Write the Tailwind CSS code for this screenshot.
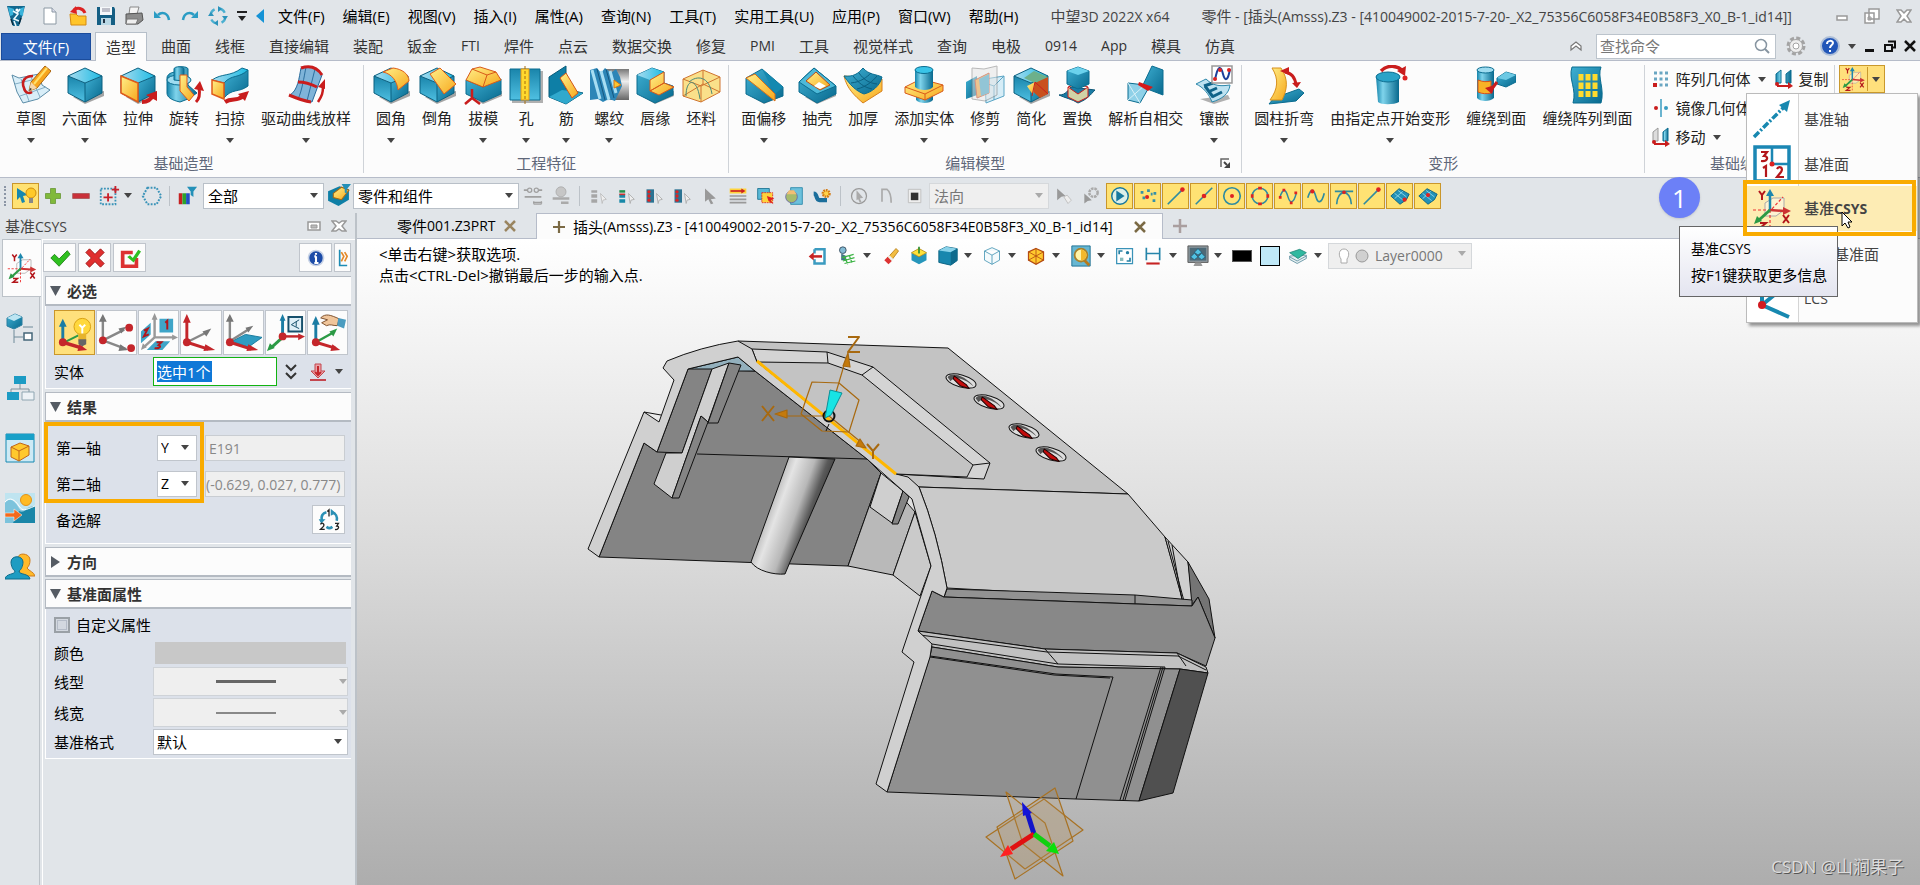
<!DOCTYPE html>
<html lang="zh-CN">
<head>
  <meta charset="UTF-8" />
  <meta name="viewport" content="width=device-width, initial-scale=1.0" />
  <title>中望3D 2022X x64</title>
  <script src="https://cdn.jsdelivr.net/npm/@tailwindcss/browser@4"></script>
</head>
<body class="relative flex h-screen flex-col overflow-hidden bg-[#e1e5e9] font-['Open_Sans','Noto_Sans_CJK_SC',sans-serif] text-[15px] leading-5 text-[#222]">

  <!-- icon sprite -->
  <svg class="absolute size-0" aria-hidden="true">
    <defs>
      <linearGradient id="teal" x1="0" y1="0" x2="1" y2="1"><stop offset="0" stop-color="#3fb0d3" /><stop offset="1" stop-color="#08698e" /></linearGradient>
      <linearGradient id="tealL" x1="0" y1="0" x2="0" y2="1"><stop offset="0" stop-color="#1a85ab" /><stop offset="1" stop-color="#4fc0e2" /></linearGradient>
      <linearGradient id="tealT" x1="0" y1="0" x2="1" y2="0"><stop offset="0" stop-color="#a9dcef" /><stop offset="1" stop-color="#1cbbe4" /></linearGradient>
      <linearGradient id="tube" x1="0" y1="0" x2="1" y2="0"><stop offset="0" stop-color="#1584ab" /><stop offset=".3" stop-color="#7fd4ec" /><stop offset="1" stop-color="#08698e" /></linearGradient>
      <linearGradient id="gold" x1="0" y1="0" x2="1" y2="1"><stop offset="0" stop-color="#fff08a" /><stop offset="1" stop-color="#f7a81c" /></linearGradient>
      <linearGradient id="steel" x1="0" y1="0" x2="0" y2="1"><stop offset="0" stop-color="#777" /><stop offset=".4" stop-color="#eee" /><stop offset="1" stop-color="#666" /></linearGradient>
      <g id="shadow"><path d="M8 32 20 39 39 31 39 26z" fill="#000" opacity=".35" /></g>
      <g id="box">
        <use href="#shadow" />
        <path d="M20 3 37 11 20 18 3 11z" fill="url(#tealT)" /><path d="M3 11 20 18V37L3 28z" fill="url(#tealL)" /><path d="M20 18 37 11V28L20 37z" fill="url(#teal)" />
        <path d="M20 3 37 11 20 18 3 11zM3 11V28L20 37 37 28V11M20 18V37" fill="none" stroke="#0b6080" />
      </g>
    </defs>
    <symbol id="caret" viewBox="0 0 8 5"><path d="M0 0h8L4 5z" fill="#444" /></symbol>
    <symbol id="caret-off" viewBox="0 0 8 5"><path d="M0 0h8L4 5z" fill="#aaa" /></symbol>

    <symbol id="logo" viewBox="0 0 20 22"><path d="M1 1h18l-3 11-3 9H7L4 12z" fill="#12688f" /><path d="M2 2l6 2-1 6-3 1zM18 2l-5 2 1 6 3 1z" fill="#39b4dc" /><path d="M7 6l5 3-4 5 5 2M14 4l-3 4M8 16l2 5" stroke="#eaf7fc" stroke-width="1.600" fill="none" /><circle cx="11" cy="5" r="1.600" fill="#fff" /><path d="M5 14l2 6M15 13l-2 6" stroke="#0a2e42" stroke-width="1.500" /></symbol>
    <symbol id="new" viewBox="0 0 20 20"><path d="M4 2h8l4 4v12H4z" fill="#fff" stroke="#8b98a3" /><path d="M12 2v4h4" fill="#dde" stroke="#8b98a3" /></symbol>
    <symbol id="open" viewBox="0 0 20 20"><path d="M2 8h6l2 2h8v9H3z" fill="#ffc52b" stroke="#d58b12" /><path d="M17 7C15 2 9 1 6 4" stroke="#d22" stroke-width="3" fill="none" /><path d="M8 0 2 6l7 2z" fill="#d22" /></symbol>
    <symbol id="save" viewBox="0 0 20 20"><path d="M1 1h17l1 2v16H1z" fill="#155f84" /><path d="M4 1h12v8H4z" fill="#f5f8fa" /><path d="M5 12h10v7H5z" fill="#b9d7e4" /><path d="M6 3h8M6 5h8" stroke="#889" /><path d="M7 13h2v4H7z" fill="#234" /></symbol>
    <symbol id="print" viewBox="0 0 20 20"><path d="M6 1h9l-2 7H5z" fill="#f4f4f4" stroke="#888" /><path d="M2 8l16-1 1 7-5 4H2z" fill="#8c8c8c" stroke="#555" /><path d="M3 13h11l-2 5H2z" fill="#eee" stroke="#777" /></symbol>
    <symbol id="undo" viewBox="0 0 20 20"><path d="M17 14C16 7 10 5 6 9" stroke="#2b9cc4" stroke-width="2.500" fill="none" /><path d="M2 5v7h7z" fill="#2b9cc4" /></symbol>
    <symbol id="redo" viewBox="0 0 20 20"><path d="M3 14C4 7 10 5 14 9" stroke="#2b9cc4" stroke-width="2.500" fill="none" /><path d="M18 5v7h-7z" fill="#2b9cc4" /></symbol>
    <symbol id="regen" viewBox="0 0 20 20"><circle cx="10" cy="10" r="7.5" fill="none" stroke="#4aafd0" stroke-width="2.4" stroke-dasharray="8 3.8" /><path d="M10 0l4 3-4 3zM20 10l-3 4-3-4zM10 20l-4-3 4-3zM0 10l3-4 3 4z" fill="#2b93bb" /></symbol>

    <!-- ribbon, 40x40 -->
    <symbol id="sketch" viewBox="0 0 40 40"><path d="M1 10 8 13 28 9 31 20 39 25 27 34 12 38 6 27z" fill="#d9eef8" stroke="#5c8da8" /><path d="M4 19l25-6M9 31l26-9M10 14l8 22M20 12l9 20" stroke="#84aec6" fill="none" /><path d="M22 11c-8 0-12 5-9 12 1 5 5 6 8 4" fill="none" stroke="#c81e1e" stroke-width="2.6" /><path d="M18 26l2-9L34 1l6 5-14 17z" fill="#f7a51d" stroke="#ab6510" /><path d="M23 19 36 3" stroke="#ffdf6a" stroke-width="2" /><path d="M18 26l2-9 6 6z" fill="#f5d7ab" /><path d="M18 26l1-3 2 1z" fill="#333" /></symbol>
    <symbol id="cube" viewBox="0 0 40 40"><use href="#box" /></symbol>
    <symbol id="extrude" viewBox="0 0 40 40"><use href="#box" /><path d="M3 11 20 18V37L3 28z" fill="url(#gold)" stroke="#e05a1a" stroke-width="1.5" /><path d="M24 37c6 0 9-2 11-7" stroke="#c91d1d" stroke-width="4" fill="none" /><path d="M28 30l11-4v10z" fill="#c91d1d" /></symbol>
    <symbol id="revolve" viewBox="0 0 40 40"><path d="M3 13c0-4 5-6 9-6V4c0-3 12-3 12 0v16l9 8-9 6-8 3C7 35 3 32 3 28z" fill="url(#tube)" stroke="#0b6d90" /><ellipse cx="15" cy="15" rx="12" ry="5" fill="#9edcf0" stroke="#0b6d90" /><path d="M10 15V4c0-3 10-3 10 0v12z" fill="url(#tube)" stroke="#0b6d90" /><path d="M16 10h7v12l7 8-5 6-9-10z" fill="url(#gold)" stroke="#e05a1a" /><path d="M32 37c4-4 4-9 3-14" stroke="#c91d1d" stroke-width="3" fill="none" /><path d="M30 24l6-8 4 10z" fill="#c91d1d" /></symbol>
    <symbol id="sweep" viewBox="0 0 40 40"><path d="M14 15c10-9 14-1 24-10v16c-9 7-16 2-24 12z" fill="url(#teal)" stroke="#0b6d90" /><path d="M2 15C12 8 20 12 32 3l6 2C28 14 22 9 14 18z" fill="url(#tealT)" stroke="#0b6d90" /><path d="M2 15l12 3v16L2 29z" fill="url(#gold)" stroke="#e05a1a" stroke-width="1.5" /><path d="M15 37c7-5 12 0 18-6" stroke="#c91d1d" stroke-width="4" fill="none" /><path d="M28 29l11-3-4 10z" fill="#c91d1d" /></symbol>
    <symbol id="loft" viewBox="0 0 40 40"><path d="M15 3c9-3 16-1 21 7L26 37C18 36 11 33 4 30c8-5 9-17 11-27z" fill="#7fb4d9" stroke="#26699a" /><path d="M20 2c-2 10-4 24-8 32M29 4l-8 32" stroke="#2d6f9e" fill="none" /><path d="M15 3c9-3 16-1 21 7M12 17c8 0 13 2 19 5M3 30c7 3 14 6 22 7" stroke="#c91d1d" stroke-width="3" fill="none" /><path d="M32 37c4-6 5-9 5-16" stroke="#c91d1d" stroke-width="2.500" fill="none" /><path d="M32 22l7-8v10z" fill="#c91d1d" /></symbol>
    <symbol id="fillet" viewBox="0 0 40 40"><use href="#box" /><path d="M12 7 22 3c9 1 16 6 16 13L27 25C26 16 21 9 12 7z" fill="url(#gold)" stroke="#e0601a" /></symbol>
    <symbol id="chamfer" viewBox="0 0 40 40"><use href="#box" /><path d="M13 9 23 3 39 19 27 29z" fill="url(#gold)" stroke="#e0601a" /></symbol>
    <symbol id="draft" viewBox="0 0 40 40"><use href="#shadow" /><path d="M3 15 20 22 38 14V29L20 37 3 29z" fill="url(#teal)" stroke="#0b6d90" /><path d="M9 4 17 2 33 7 38 15 20 22 3 15z" fill="url(#gold)" stroke="#d85a1a" /><path d="M9 4l15 6 9-3M24 10l-4 12" fill="none" stroke="#d85a1a" /><path d="M9 24v10M9 33l-7 6M9 33l8 6" stroke="#c91d1d" stroke-width="2.5" /></symbol>
    <symbol id="hole" viewBox="0 0 40 40"><path d="M6 6h31v32H6z" fill="#000" opacity=".3" /><path d="M4 4h30v31H4z" fill="url(#tealL)" stroke="#0b6d90" /><path d="M15 4h8v31h-8z" fill="#ffd92d" stroke="#e0951a" /><path d="M19 1v38" stroke="#a46a11" stroke-dasharray="3 2" /></symbol>
    <symbol id="rib" viewBox="0 0 40 40"><path d="M3 12 20 1v23l17 4-17 11L3 32z" fill="#0e7fa6" stroke="#075a79" /><path d="M3 32l13-7 21 3-17 11z" fill="#30a9cd" /><path d="M14 13l6-5 12 20-6 5z" fill="url(#gold)" stroke="#d2561a" /></symbol>
    <symbol id="thread" viewBox="0 0 40 40"><path d="M18 4h22v31H18z" fill="url(#steel)" /><path d="M1 5l7-2 4 5 4-5 6 5 5-4 4 8 2 9-7 15-6-2-6 3-5-3-8 1z" fill="#2c86b7" /><path d="M3 5l8 29M12 6l8 29M21 6l6 22" stroke="#a6ddf2" stroke-width="3" fill="none" /><path d="M8 4l8 31M17 4l8 29" stroke="#155780" fill="none" /><path d="M25 15l7 5-7 3z" fill="#fdc52e" stroke="#d2741a" /></symbol>
    <symbol id="lip" viewBox="0 0 40 40"><use href="#shadow" /><path d="M2 10 17 3l12 4v11l9 3v9L20 38 2 29z" fill="url(#teal)" stroke="#0b6d90" /><path d="M2 10 17 3l12 4-14 8z" fill="url(#tealT)" /><path d="M15 15l14-8v11l-14 8zM15 26l14-8 10 4-15 8z" fill="url(#gold)" stroke="#d85a1a" /></symbol>
    <symbol id="stock" viewBox="0 0 40 40"><path d="M2 14 22 5l17 7v15L20 37 2 31z" fill="#fae08a" stroke="#cf7430" /><path d="M2 14l18 7 19-9M20 21v16M22 5v14L2 31M22 19l17 8" fill="none" stroke="#cf7430" /><path d="M5 31c0-18 11-19 14 3M8 17c8-7 20-6 23 12" fill="none" stroke="#4b8a79" /></symbol>
    <symbol id="offset" viewBox="0 0 40 40"><use href="#shadow" /><path d="M2 13 18 4l21 18v9L20 38 2 29z" fill="url(#teal)" stroke="#0b6d90" /><path d="M18 4l21 18-8 7z" fill="#1489b0" /><path d="M2 13l9-4 20 20v7L2 13z" fill="url(#gold)" stroke="#d8701a" /></symbol>
    <symbol id="shell" viewBox="0 0 40 40"><use href="#shadow" /><path d="M2 17 17 3l22 18v8L20 38 2 27z" fill="url(#teal)" stroke="#0b6d90" /><path d="M2 17 17 3l22 18-19 8z" fill="#4db9d8" stroke="#0b6d90" /><path d="M9 16l10-9 14 13-10 5z" fill="url(#gold)" stroke="#b94c1a" /><path d="M17 21l5-4 7 4-6 3z" fill="#fff" /></symbol>
    <symbol id="thicken" viewBox="0 0 40 40"><path d="M1 11l38 3v12L20 38C12 31 4 24 1 11z" fill="url(#gold)" stroke="#d8801a" /><path d="M1 11C10 12 15 9 20 3c6 7 13 6 19 9-2 9-10 15-18 17C13 26 7 20 1 11z" fill="url(#teal)" stroke="#0b6d90" /><path d="M8 18C18 17 24 12 28 8M14 24c9-2 16-8 20-13M10 11c6 7 10 11 19 13M16 8c5 7 10 10 18 11" stroke="#0b5f80" fill="none" /></symbol>
    <symbol id="union" viewBox="0 0 40 40"><path d="M12 28h17v7c-3 4-14 4-17 0z" fill="url(#tube)" /><path d="M1 22l16-8 22 6v6L21 35 1 28z" fill="url(#gold)" stroke="#d85a1a" /><path d="M1 22l20 7 18-9M21 29v6" stroke="#d85a1a" fill="none" /><path d="M11 5v17c4 4 15 4 18 0V5z" fill="url(#tube)" /><ellipse cx="20" cy="5" rx="9" ry="3.500" fill="#39c4e8" stroke="#0b6d90" /></symbol>
    <symbol id="trim" viewBox="0 0 40 40"><path d="M1 17 12 11v19L1 34z" fill="url(#teal)" /><path d="M20 14l19-3v20l-18 7z" fill="#d6edf7" stroke="#5aa5c5" /><path d="M20 18l9 3 10-10M29 21v14" stroke="#5aa5c5" fill="none" /><path d="M10 15 24 8v20l-12 5z" fill="#f6a53a" stroke="#c9421d" /><path d="M14 14l10-5v19l-8 3z" fill="#3fa6c8" /><path d="M7 3l12 1 13-3v29L20 36 7 34z" fill="#e4e4e4" opacity=".5" stroke="#777" /></symbol>
    <symbol id="simplify" viewBox="0 0 40 40"><use href="#box" /><path d="M24 17l13-5v17l-8 4-12-11z" fill="#c9501d" /><path d="M13 13 23 6l14 6-13 6z" fill="#6db08b" /><path d="M16 21l8-4-2 13z" fill="url(#gold)" /><path d="M24 17l13 12M24 17l-3 14" stroke="#c91d1d" fill="none" /></symbol>
    <symbol id="replace" viewBox="0 0 40 40"><path d="M2 30c7 0 9-5 12-8l24 3c-5 5-7 9-17 13-6-4-13-5-19-8z" fill="#1a7ca5" stroke="#0b5575" /><path d="M11 22l9-3 11 3-10 7zM11 22v10l10 5 10-5V22" fill="#ffe9a6" stroke="#c91d1d" fill-opacity=".8" /><path d="M10 6l11-4 11 4v13l-11 5-11-5z" fill="url(#teal)" stroke="#0b6d90" /><path d="M10 6l11 4 11-4-11-4z" fill="#6bd2ed" /></symbol>
    <symbol id="selfx" viewBox="0 0 40 40"><path d="M16 22 26 1l11 4v25z" fill="url(#teal)" stroke="#0b6d90" /><path d="M2 18l17 2 3 4-8 14-12-3z" fill="#8fd1e8" stroke="#0b6d90" /><path d="M2 18l12 20M19 20 2 35" stroke="#d8f0f8" fill="none" /><path d="M13 17l14 5-5 4-10-6z" fill="#d61a1a" /></symbol>
    <symbol id="emboss" viewBox="0 0 40 40"><path d="M6 34l14 5 16-5-2-4z" fill="#000" opacity=".3" /><path d="M2 19l10-5c8 8 16 7 24 6-1 9-8 14-18 17C15 29 9 22 2 19z" fill="#bde2f1" stroke="#2d88ab" /><path d="M10 21l9-3M14 27l9-4M18 32l10-5M11 21l8 11" stroke="#0f6389" stroke-width="3" fill="none" /><path d="M18 1h20v17H18z" fill="#fff" stroke="#999" stroke-width="1.500" /><path d="M21 15c3-16 6-14 8-6s5 7 7-5" stroke="#1c3f9b" stroke-width="2" fill="none" /><circle cx="21" cy="14" r="2" fill="#d22" /><circle cx="26" cy="5" r="2" fill="#d22" /><circle cx="35" cy="5" r="2" fill="#d22" /></symbol>
    <symbol id="bend" viewBox="0 0 40 40"><path d="M10 33l25-9 5 4-8 8-27 3z" fill="url(#teal)" stroke="#0b6d90" /><path d="M8 3h9c8 12 6 22 1 32H6C14 24 15 14 8 3z" fill="url(#gold)" stroke="#d8901a" /><path d="M21 7c7 1 10 5 11 13" stroke="#c91d1d" stroke-width="3" fill="none" /><path d="M16 6l9-4v8zM28 18l9-1-4 6z" fill="#c91d1d" /></symbol>
    <symbol id="morph" viewBox="0 0 40 40"><path d="M6 12h23v25c-5 3-18 3-21 0z" fill="url(#tube)" /><ellipse cx="18" cy="12" rx="12" ry="5" fill="#2aa3c8" stroke="#0b6d90" /><path d="M11 6C18-1 27 1 32 5" stroke="#c91d1d" stroke-width="3.500" fill="none" /><path d="M27 6l9-5-1 10z" fill="#c91d1d" /><circle cx="35" cy="13" r="2.500" fill="#d22" /></symbol>
    <symbol id="wrap" viewBox="0 0 40 40"><path d="M1 5h17v28c-4 4-14 4-17 0z" fill="url(#tube)" /><ellipse cx="9.500" cy="5" rx="8.500" ry="3" fill="#9edcf0" stroke="#0b6d90" /><path d="M2 15c5 2 9 2 13 1v12c-4 1-9 1-13-1z" fill="#f8b226" stroke="#d8501a" /><path d="M21 13l9-6 10 3v7l-10 5-9-3z" fill="url(#teal)" stroke="#0b6d90" /><path d="M21 13l9-6 10 3-10 5z" fill="#6cc9e4" /><path d="M19 20l-10 3 7 6z" fill="#c91d1d" /><path d="M21 17l-6 8" stroke="#c91d1d" stroke-width="3" /></symbol>
    <symbol id="wrap-arr" viewBox="0 0 40 40"><path d="M5 2h29c-4 10 4 22 0 36H6c4-14-5-24-1-36z" fill="url(#teal)" stroke="#0b6d90" /><path d="M14 9v23M21 9v23M28 9v23" stroke="#ffdb2e" stroke-width="5" stroke-dasharray="6.500 2" /></symbol>

    <symbol id="array" viewBox="0 0 20 20"><path d="M3 4h14M3 10h14" stroke="#6aa6c2" stroke-width="3" stroke-dasharray="3 2.500" /><path d="M8.500 16h9" stroke="#6aa6c2" stroke-width="3" stroke-dasharray="3 2.500" /><path d="M2 14h4v4H2z" fill="#c91d1d" /></symbol>
    <symbol id="mirror" viewBox="0 0 20 20"><path d="M10 1v18" stroke="#3a9cc1" stroke-width="1.500" /><circle cx="5" cy="10" r="2" fill="#c91d1d" /><circle cx="15" cy="10" r="2" fill="#3a9cc1" /></symbol>
    <symbol id="copy" viewBox="0 0 20 20"><path d="M2 5l5-4v13H2zM12 5l5-4v13h-5z" fill="url(#tube)" stroke="#0b6d90" /><path d="M3 17h12" stroke="#c91d1d" stroke-width="2" /><path d="M14 13l5 4-5 3z" fill="#c91d1d" /><circle cx="3" cy="15" r="2" fill="#c91d1d" /></symbol>
    <symbol id="move" viewBox="0 0 20 20"><path d="M2 5l5-4v13H2z" fill="#ddd" stroke="#999" /><path d="M12 5l5-4v13h-5z" fill="url(#tube)" stroke="#0b6d90" /><path d="M3 17h12" stroke="#c91d1d" stroke-width="2" /><path d="M14 13l5 4-5 3z" fill="#c91d1d" /><circle cx="3" cy="15" r="2" fill="#c91d1d" /></symbol>
    <symbol id="csys" viewBox="0 0 40 40"><path d="M13 14l8-5h11v12l-8 6H13z" fill="#fff" fill-opacity=".4" stroke="#aaa" /><path d="M1 21h17M18 39V22l13-14" stroke="#e33" stroke-width="1.200" stroke-dasharray="3 2" fill="none" /><path d="M18 21V5" stroke="#1d87ae" stroke-width="2.500" /><path d="M14 7l4-7 4 7z" fill="#1d87ae" /><path d="M18 21l14 1" stroke="#c33" stroke-width="2.500" /><path d="M31 18l8 4-8 4z" fill="#c33" /><path d="M18 21 7 31" stroke="#2b9a45" stroke-width="3" /><path d="M2 35l3-8 5 5z" fill="#2b9a45" /><path d="M7 2l3 4 3-4M10 6v5M31 26l6 8M37 26l-6 8M8 34h6l-6 5h7" stroke="#b3161b" stroke-width="2" fill="none" /></symbol>
    <symbol id="axis" viewBox="0 0 40 40"><path d="M2 38 32 8" stroke="#1788b0" stroke-width="3.500" stroke-dasharray="7 2 2 2" /><path d="M38 1l-3 12-8-7z" fill="#1788b0" /></symbol>
    <symbol id="plane" viewBox="0 0 40 40"><path d="M3 3h34v34H3z" fill="#fff" stroke="#1b87b4" stroke-width="3.500" /><path d="M20 3v17M20 20h17" fill="none" stroke="#1b87b4" stroke-width="2.500" /><circle cx="20" cy="20" r="2.500" fill="#d22" /><path d="M9 8h6l-3 4c5 0 4 6-3 5M11 24l3-2v11M25 25c2-4 7-1 4 3l-4 5h7" stroke="#b3161b" stroke-width="2.200" fill="none" /></symbol>
    <symbol id="lcs" viewBox="0 0 40 40"><path d="M10 26V4M10 26 32 8M10 26l27 12" stroke="#1788b0" stroke-width="4" /><circle cx="10" cy="26" r="4" fill="#d11a20" /></symbol>

    <!-- selection toolbar, 24x24 -->
    <symbol id="pickbulb" viewBox="0 0 24 24"><path d="M3 4l11 7-5 1 2 6-3 1-2-6-3 3z" fill="#1788b0" /><circle cx="17" cy="9" r="5" fill="#ffc928" stroke="#d08d0d" /><path d="M15 14h4v5h-4z" fill="#888" /></symbol>
    <symbol id="plus" viewBox="0 0 24 24"><path d="M9 3h6v6h6v6h-6v6H9v-6H3V9h6z" fill="#80b93b" stroke="#6b9a3a" /></symbol>
    <symbol id="minus" viewBox="0 0 24 24"><path d="M2 9h20v6H2z" fill="#c9303a" stroke="#a55" /></symbol>
    <symbol id="pickbox" viewBox="0 0 24 24"><path d="M3 4h16v17H3z" fill="none" stroke="#3a93b8" stroke-width="2" stroke-dasharray="2 1.500" /><path d="M11 9v9M6 13.500h10M19 1v8M15 5h8" stroke="#c9212a" stroke-width="2" /></symbol>
    <symbol id="pickhex" viewBox="0 0 24 24"><path d="M7 3h10l5 9-5 9H7l-5-9z" fill="none" stroke="#3a93b8" stroke-width="2.200" stroke-dasharray="2 1.500" /></symbol>
    <symbol id="colorfilter" viewBox="0 0 24 24"><path d="M3 9h4v12H3z" fill="#c62020" /><path d="M7 9h4v12H7z" fill="#2ba32b" /><path d="M11 9h4v12h-4z" fill="#234ec4" /><path d="M12 2h11l-4 5v6l-3-2V7z" fill="#2390b8" /></symbol>
    <symbol id="compfilter" viewBox="0 0 24 24"><path d="M2 8l11-5 9 3v10l-10 6-10-5z" fill="#0e7fa6" /><path d="M7 10l8-6 7 3-7 9-8-2z" fill="url(#gold)" stroke="#a86a10" /><path d="M15 1h9l-4 5v4l-2-1V6z" fill="#2390b8" /></symbol>
    <symbol id="chain" viewBox="0 0 24 24"><circle cx="8" cy="5" r="2.500" fill="none" stroke="#a0a0a0" stroke-width="1.500" /><circle cx="16" cy="5" r="2.500" fill="none" stroke="#a0a0a0" stroke-width="1.500" /><path d="M1 5h4M19 5h4M2 13h20M12 20h11" stroke="#a0a0a0" stroke-width="2" /><path d="M13 18v4h9v-4" fill="none" stroke="#a0a0a0" /></symbol>
    <symbol id="stamp" viewBox="0 0 24 24"><circle cx="12" cy="7" r="6" fill="#c6c6c6" stroke="#aaa" /><path d="M2 15h20M12 20h9" stroke="#aaa" stroke-width="3" /></symbol>
    <symbol id="listg" viewBox="0 0 24 24"><path d="M4 5h7v3H4zM4 10h7v4H4zM4 16h7v4H4z" fill="#a6a6a6" /><path d="M15 9l7 7-4 1-1 4z" fill="#eee" stroke="#bbb" /></symbol>
    <symbol id="listc" viewBox="0 0 24 24"><path d="M4 5h7v3H4z" fill="#238f4a" /><path d="M4 10h7v4H4zM4 16h7v4H4z" fill="#1788a8" /><path d="M4 9h7v2H4z" fill="#c33" /><path d="M15 9l7 7-4 1-1 4z" fill="#eee" stroke="#aaa" /></symbol>
    <symbol id="listr" viewBox="0 0 24 24"><path d="M3 4h9v16H3z" fill="#2c7392" /><circle cx="6" cy="7" r="2" fill="#d22" /><circle cx="6" cy="12" r="2" fill="#d22" /><circle cx="6" cy="17" r="2" fill="#d22" /><path d="M15 9l7 7-4 1-1 4z" fill="#eee" stroke="#aaa" /></symbol>
    <symbol id="arrowg" viewBox="0 0 24 24"><path d="M6 3l13 12-6 1 3 5-3 1-3-6-4 3z" fill="#999" /></symbol>
    <symbol id="menured" viewBox="0 0 24 24"><path d="M2 3h20v6H2z" fill="#ffd43b" /><path d="M3 6h14" stroke="#c22" stroke-width="2" /><path d="M16 3l5 3-5 3z" fill="#c22" /><path d="M2 12h20M2 16h20M2 20h20" stroke="#999" stroke-width="2" /></symbol>
    <symbol id="pickall" viewBox="0 0 24 24"><path d="M2 3h14v13H2z" fill="#58b8d6" stroke="#17708f" /><path d="M7 8h13v12H7z" fill="#ffd43b" stroke="#d22" stroke-dasharray="2 1" /><path d="M13 12l9 3-4 2 3 5-6-4z" fill="#d22" /></symbol>
    <symbol id="globe" viewBox="0 0 24 24"><path d="M8 2h14v20H8z" fill="#6cc1dc" stroke="#2586a8" /><circle cx="9" cy="13" r="7" fill="#a6bb6c" stroke="#66a" /><path d="M3 10h12l-3-5H6z" fill="#f1bf75" /></symbol>
    <symbol id="gearpick" viewBox="0 0 24 24"><path d="M2 9c5 0 2 8 7 8h9" stroke="#1b6e9b" stroke-width="5" fill="none" /><circle cx="17" cy="9" r="4" fill="#ffd34a" stroke="#d47a12" stroke-width="3" stroke-dasharray="2 1" /></symbol>
    <symbol id="circpick" viewBox="0 0 24 24"><circle cx="12" cy="12" r="9" fill="none" stroke="#999" stroke-width="1.500" /><path d="M9 5l8 9-4 1 2 4-2 1-2-4-2 1z" fill="#aaa" /></symbol>
    <symbol id="npick" viewBox="0 0 24 24"><path d="M6 19V4h6c4 3 5 8 5 16" fill="none" stroke="#aaa" stroke-width="2" /></symbol>
    <symbol id="sqpick" viewBox="0 0 24 24"><path d="M4 4h15v16H4z" fill="#eee" stroke="#bbb" /><path d="M7 8h9v9H7z" fill="#333" /></symbol>
    <symbol id="arrowtag" viewBox="0 0 24 24"><path d="M5 3l10 9-5 1-5 4z" fill="#999" /><path d="M13 13l4-2 5 6-4 4z" fill="#eee" stroke="#bbb" /></symbol>
    <symbol id="arrowgear" viewBox="0 0 24 24"><circle cx="15" cy="8" r="5" fill="none" stroke="#aaa" stroke-width="3" stroke-dasharray="3 1" /><path d="M4 9l9 8-5 1-4 3z" fill="#999" /></symbol>

    <symbol id="s-play" viewBox="0 0 24 24"><circle cx="12" cy="12" r="9" fill="#dcefe8" stroke="#17789d" stroke-width="1.600" /><path d="M8 6l9 6-9 6z" fill="#17789d" /></symbol>
    <symbol id="s-pts" viewBox="0 0 24 24"><path d="M4 8h3M11 6h3M18 9h3M6 14h3M17 17h3M15 10h2" stroke="#3790a8" stroke-width="3" /><circle cx="11" cy="13" r="2.200" fill="#d22" /></symbol>
    <symbol id="s-end" viewBox="0 0 24 24"><path d="M3 21 19 5" stroke="#2f8ba0" stroke-width="1.800" /><circle cx="19" cy="5" r="2.500" fill="#d22" /></symbol>
    <symbol id="s-mid" viewBox="0 0 24 24"><path d="M3 21 21 3" stroke="#2f8ba0" stroke-width="1.800" /><circle cx="12" cy="12" r="2.500" fill="#d22" /></symbol>
    <symbol id="s-cen" viewBox="0 0 24 24"><circle cx="12" cy="12" r="9" fill="none" stroke="#2f8ba0" stroke-width="1.800" /><circle cx="12" cy="12" r="2.200" fill="#d22" /></symbol>
    <symbol id="s-quad" viewBox="0 0 24 24"><circle cx="12" cy="12" r="8.500" fill="none" stroke="#2f8ba0" stroke-width="1.800" /><path d="M10 2h4v3h-4zM10 19h4v3h-4zM2 10h3v4H2zM19 10h3v4h-3z" fill="#d22" /></symbol>
    <symbol id="s-spl" viewBox="0 0 24 24"><path d="M3 14C7 1 10 6 12 13s6 8 9-4" fill="none" stroke="#2f8ba0" stroke-width="1.600" /><path d="M6 4h3v3H6zM14 18h3v3h-3zM19 7h3v3h-3zM2 12h3v3H2z" fill="#d22" /></symbol>
    <symbol id="s-crv" viewBox="0 0 24 24"><path d="M3 14C7 1 10 6 12 13s6 8 9-4" fill="none" stroke="#2f8ba0" stroke-width="1.800" /><circle cx="8" cy="7" r="2.300" fill="#d22" /></symbol>
    <symbol id="s-tan" viewBox="0 0 24 24"><path d="M2 7h20M4 21C5 4 19 4 20 21" fill="none" stroke="#2f8ba0" stroke-width="1.800" /><circle cx="12" cy="8" r="2" fill="#d22" /></symbol>
    <symbol id="s-face" viewBox="0 0 24 24"><path d="M2 12 11 4l11 6-3 6-7 5z" fill="#2291b7" stroke="#0c617f" /><path d="M6 9l10 8M10 6l9 7M6 15l9-8" stroke="#8bd3e9" fill="none" /><circle cx="17" cy="16" r="2.300" fill="#d22" /></symbol>
    <symbol id="s-facec" viewBox="0 0 24 24"><path d="M2 12 11 4l11 6-3 6-7 5z" fill="#2291b7" stroke="#0c617f" /><path d="M6 9l10 8M10 6l9 7M6 15l9-8" stroke="#8bd3e9" fill="none" /><circle cx="12" cy="11" r="2.300" fill="#d22" /></symbol>

    <!-- view toolbar, 24x24 -->
    <symbol id="exit" viewBox="0 0 24 24"><path d="M9 4h12v17H9v-5M9 9V4" fill="none" stroke="#3b9bc0" stroke-width="3" /><path d="M7 12.500h11" stroke="#c62323" stroke-width="3" /><path d="M2 12.500l6-5v10z" fill="#c62323" /></symbol>
    <symbol id="v-tree" viewBox="0 0 24 24"><circle cx="7" cy="5" r="4" fill="#83bcd6" stroke="#345" /><path d="M5 9l6 3v5H5z" fill="#478" /><path d="M6 14l14-4M7 18l14-4M9 21l13-3M9 13l4 9M15 12l3 8" stroke="#3cb445" stroke-width="1.500" /></symbol>
    <symbol id="eraser" viewBox="0 0 24 24"><path d="M8 14 18 3l3 3-9 12z" fill="#f2bd42" stroke="#b57c16" /><path d="M4 17l4-4 5 5-4 4z" fill="#d33" /><path d="M8 13l5 5 2-2-5-5z" fill="#eee" /></symbol>
    <symbol id="v-top" viewBox="0 0 24 24"><path d="M3 8v9l9 5 9-5V8l-9 5z" fill="#2696bb" /><path d="M3 8l9-5 9 5-9 5z" fill="#ffe23a" stroke="#b28a15" /><path d="M12 1v8" stroke="#2a8f32" stroke-width="2" /></symbol>
    <symbol id="v-cube" viewBox="0 0 24 24"><path d="M2 6l8-4 12 2v13l-7 5-13-3z" fill="#1887ae" stroke="#0b6080" /><path d="M2 6l8-4 12 2-7 4z" fill="#8ad3ea" /><path d="M15 8l7-4v13l-7 5z" fill="#0e6b8d" /></symbol>
    <symbol id="v-wire" viewBox="0 0 24 24"><path d="M3 6l9-4 9 4v11l-9 5-9-5zM3 6l9 5 9-5M12 11v11" fill="#f4fafc" stroke="#4796b4" /></symbol>
    <symbol id="v-hex" viewBox="0 0 24 24"><path d="M12 3l9 4v10l-9 5-9-5V7z" fill="#ffc92d" stroke="#b34b12" stroke-width="1.500" /><path d="M12 3v19M3 7l18 10M21 7 3 17" stroke="#b34b12" /></symbol>
    <symbol id="v-zoom" viewBox="0 0 24 24"><path d="M2 1h20v22H2z" fill="#67b7d2" stroke="#1b6f92" /><circle cx="12" cy="11" r="7" fill="#fff4a8" stroke="#a8812b" stroke-width="2" /><path d="M12 5a6 6 0 0 1 0 12z" fill="#f3b92d" /><path d="M16 17l5 5" stroke="#b7791a" stroke-width="3" /></symbol>
    <symbol id="v-fit" viewBox="0 0 24 24"><path d="M2 3h19v18H2z" fill="#fff" stroke="#3a93b8" stroke-width="1.500" /><path d="M5 10V6h4M18 14v4h-4" stroke="#267fa3" stroke-width="2" fill="none" /><circle cx="15" cy="8" r="2" fill="#267fa3" /><path d="M6 14h4v4H6z" fill="#8bb" /></symbol>
    <symbol id="v-dim" viewBox="0 0 24 24"><path d="M4 2v15M20 2v15M4 9h16" stroke="#2685aa" stroke-width="2" /><path d="M4 21h16" stroke="#c62323" stroke-width="2.500" /></symbol>
    <symbol id="v-disp" viewBox="0 0 24 24"><path d="M1 1h22v18H1z" fill="#8f999f" stroke="#555" /><path d="M3 3h18v14H3z" fill="#4e6a77" /><path d="M8 8l4-4 4 4-4 3zM4 13l4-4 4 4-4 3zM12 13l4-4 4 4-4 3z" fill="#52c2e2" stroke="#17506c" stroke-width=".7" /><path d="M7 23h10l-2-4H9z" fill="#999" /></symbol>
    <symbol id="v-layer" viewBox="0 0 24 24"><path d="M2 16l9 5 11-6v-4L2 12z" fill="#e5f0f2" stroke="#5b8d9d" /><path d="M2 13l9 5 11-6" fill="none" stroke="#5b8d9d" /><path d="M2 8l12-4 8 4-10 7z" fill="#2fb9a0" stroke="#23877a" /></symbol>

    <!-- panel side column, 30x30 -->
    <symbol id="p-tree" viewBox="0 0 30 30"><path d="M2 5l8-4 7 3v8l-8 4-7-3z" fill="url(#teal)" stroke="#2b7ea0" /><path d="M2 5l7 3 8-4-7-3z" fill="#bde5f2" /><path d="M18 14h10M9 17v13M9 24h9" stroke="#6e8a99" fill="none" /><path d="M19 20h8v7h-8z" fill="#fff" stroke="#46677a" stroke-width="1.500" /></symbol>
    <symbol id="p-org" viewBox="0 0 30 30"><path d="M15 10v6M6 21v-5h18v5" fill="none" stroke="#7e919c" /><path d="M9 3h12v8H9zM2 19h12v8H2z" fill="#1b9bc4" /><path d="M17 19h12v8H17z" fill="#edf2f6" stroke="#8fa6b2" /></symbol>
    <symbol id="p-win" viewBox="0 0 30 30"><path d="M1 1h28v28H1z" fill="#cdeaf5" stroke="#1789b2" /><path d="M1 1h28v6H1z" fill="#19a0c8" /><path d="M6 14l9-4 9 3v9l-10 6-8-4z" fill="#ffc92d" stroke="#c1661a" /><path d="M6 14l8 4 10-5M14 18v10" fill="none" stroke="#c1661a" /></symbol>
    <symbol id="p-pic" viewBox="0 0 30 30"><path d="M0 0h30v30H0z" fill="#bfe4f0" /><path d="M0 10C5 3 10 8 14 15s8-3 16-2v17H0z" fill="#7cc3dc" /><path d="M14 18c5 3 8-4 16-5v17H8z" fill="#1a86a8" /><path d="M0 9C5 3 10 7 14 13s6 4 16 0" fill="none" stroke="#fff" /><circle cx="21" cy="7" r="5.500" fill="#ffba24" stroke="#e2921a" /><path d="M0 20h9v-4l8 6-8 6v-4H0z" fill="#f26a1d" stroke="#fff" stroke-width=".5" /></symbol>
    <symbol id="p-user" viewBox="0 0 30 30"><path d="M13 5c0-6 12-5 12 2 0 4-1 6-3 8 2 3 7 4 8 8H15z" fill="#ffba2a" stroke="#cf7c1b" /><path d="M6 9c0-7 12-7 12 0 0 4-2 8-4 9 0 4 10 2 11 8H0c1-6 10-4 10-8-2-1-4-5-4-9z" fill="#1d9cc2" stroke="#0e6c8c" /></symbol>

    <symbol id="ok" viewBox="0 0 24 24"><path d="M2 12l4-4 5 5L20 4l3 4L11 21z" fill="#2fc01f" stroke="#23861a" /></symbol>
    <symbol id="no" viewBox="0 0 24 24"><path d="M2 6l4-4 6 6 6-6 4 4-6 6 6 6-4 4-6-6-6 6-4-4 6-6z" fill="#e02e2e" stroke="#9f1c1c" /></symbol>
    <symbol id="apply" viewBox="0 0 24 24"><path d="M19 12v9H4V6h11" fill="none" stroke="#dc3232" stroke-width="4" /><path d="M9 11l3-2 3 3 6-9 3 2-8 12z" fill="#2fc01f" /></symbol>
    <symbol id="info" viewBox="0 0 24 24"><circle cx="12" cy="12" r="9" fill="#1b4ba8" stroke="#c8d3e6" stroke-width="2" /><path d="M12 6v2M12 10v8M10 10h2M10 18h5" stroke="#fff" stroke-width="2.500" /></symbol>
    <symbol id="pull" viewBox="0 0 12 24"><path d="M2 2v19h9" fill="none" stroke="#1e8cb4" stroke-width="2" /><path d="M4 5l3 5-3 6M8 5l3 5-3 6" fill="none" stroke="#e48a2b" stroke-width="2" /></symbol>

    <!-- axis modes, 40x40 -->
    <symbol id="m-auto" viewBox="0 0 40 40"><path d="M8 31 24 23" stroke="#2b9a45" stroke-width="2" /><path d="M8 30V12" stroke="#1b7da4" stroke-width="3" /><path d="M8 30l20 6" stroke="#c4262b" stroke-width="3.500" /><path d="M4 14l4-8 4 8z" fill="#1b7da4" /><path d="M25 32l8 6-10 1z" fill="#c4262b" /><circle cx="8" cy="30" r="4" fill="#c4262b" /><circle cx="28" cy="14" r="8.500" fill="#ffd83d" stroke="#d8a014" /><path d="M25 12l3 3 3-3M28 15v8" stroke="#fff" stroke-width="2" fill="none" /><path d="M24 21h8v8l-4 3-4-3z" fill="#e6b32c" /><path d="M24 27h8v5l-4 2-4-2z" fill="#666" /></symbol>
    <symbol id="m-3pt" viewBox="0 0 40 40"><path d="M6 28V8M6 28l22-11M6 28l24 9" stroke="#888" stroke-width="2.500" /><path d="M2 9l4-8 4 8zM22 16l8-2-5 7zM24 32l8 6-10 1z" fill="#777" /><circle cx="6" cy="28" r="4" fill="#c4262b" /><circle cx="33" cy="15" r="4" fill="#c4262b" /><circle cx="35" cy="36" r="4" fill="#c4262b" /></symbol>
    <symbol id="m-3pl" viewBox="0 0 40 40"><path d="M16 25V5M16 25h20M16 25 5 35" stroke="#999" stroke-width="2.500" /><path d="M13 7l3-7 3 7zM34 22l6 3-6 3zM2 38l2-7 4 4z" fill="#999" /><path d="M21 6h14v14H21zM2 19l10-9v12L2 31zM17 29h15l-8 9H8z" fill="#3fa5c8" /><path d="M27 10l2-2v9M5 18l4-2-4 8 5-2M18 30h5l-3 3c4 1 0 4-4 3" stroke="#b3161b" stroke-width="2" fill="none" /></symbol>
    <symbol id="m-ax" viewBox="0 0 40 40"><path d="M6 30l20-10" stroke="#888" stroke-width="2.500" /><path d="M22 19l9-3-5 8z" fill="#777" /><path d="M6 30V8M6 30l22 7" stroke="#c4262b" stroke-width="3" /><path d="M2 10l4-9 4 9zM25 32l10 6-12 1z" fill="#c4262b" /><circle cx="6" cy="30" r="4" fill="#c4262b" /></symbol>
    <symbol id="m-pl" viewBox="0 0 40 40"><path d="M8 29l14-7 17 3-14 10z" fill="#2e9cc2" stroke="#1a7b9e" /><path d="M6 29V8M6 29l19-12" stroke="#888" stroke-width="2.500" /><path d="M2 9l4-8 4 8zM22 15l8-2-5 7z" fill="#777" /><path d="M6 30l22 7" stroke="#c4262b" stroke-width="3" /><path d="M25 32l10 6-12 1z" fill="#c4262b" /><circle cx="6" cy="30" r="4" fill="#c4262b" /></symbol>
    <symbol id="m-view" viewBox="0 0 40 40"><path d="M17 24V6" stroke="#1b7da4" stroke-width="3" /><path d="M14 8l3-7 3 7z" fill="#1b7da4" /><path d="M17 24h18" stroke="#c4262b" stroke-width="2.500" /><path d="M33 21l7 3-7 4z" fill="#c4262b" /><path d="M17 25 6 35" stroke="#2b9a45" stroke-width="3" /><path d="M1 39l3-8 5 5z" fill="#2b9a45" /><circle cx="17" cy="24" r="4" fill="#c4262b" /><path d="M23 4h14v15H23z" fill="#dff0f8" stroke="#17506c" stroke-width="2" /><path d="M34 7l-8 5 8 4M31 9v5" stroke="#17506c" fill="none" /></symbol>
    <symbol id="m-drag" viewBox="0 0 40 40"><path d="M8 30 26 20" stroke="#2b9a45" stroke-width="2.500" /><path d="M22 19l8-3-4 8z" fill="#2b9a45" /><path d="M8 28V10" stroke="#1b7da4" stroke-width="3" /><path d="M4 12l4-9 4 9z" fill="#1b7da4" /><path d="M8 30l20 6" stroke="#c4262b" stroke-width="3" /><path d="M25 32l8 6-10 1z" fill="#c4262b" /><circle cx="8" cy="30" r="4" fill="#c4262b" /><path d="M13 5c5-5 10-3 19 1l-2 7c-5 0-7-2-11 0l-5-3 6-3z" fill="#f0c59a" stroke="#7c4f2c" /><path d="M31 5l8 2-2 9-7-3z" fill="#4b9cc0" /></symbol>
  </svg>

  <!-- title bar -->
  <header class="flex h-8 shrink-0 items-center pr-2 text-black">
    <div class="flex items-center">
      <svg class="ml-1 h-[22px] w-6"><use href="#logo" /></svg>
      <button aria-label="新建" class="ml-3"><svg class="size-5"><use href="#new" /></svg></button>
      <button aria-label="打开" class="ml-2"><svg class="size-5"><use href="#open" /></svg></button>
      <button aria-label="保存" class="ml-2"><svg class="size-5"><use href="#save" /></svg></button>
      <button aria-label="打印" class="ml-2"><svg class="size-5"><use href="#print" /></svg></button>
      <button aria-label="撤销" class="ml-2"><svg class="size-5"><use href="#undo" /></svg></button>
      <button aria-label="重做" class="ml-2"><svg class="size-5"><use href="#redo" /></svg></button>
      <button aria-label="重生成" class="ml-2"><svg class="size-5"><use href="#regen" /></svg></button>
      <button aria-label="自定义" class="ml-2"><svg class="h-3 w-3" viewBox="0 0 12 12"><path d="M1 2h10" stroke="#222" stroke-width="2" /><path d="M2 6h8l-4 5z" fill="#222" /></svg></button>
      <button aria-label="折叠" class="ml-2"><svg class="h-4 w-2" viewBox="0 0 8 16"><path d="M8 1v14L0 8z" fill="#1593d6" /></svg></button>
    </div>
    <nav class="ml-[14px] flex gap-[18px] whitespace-nowrap">
      <a href="#">文件(F)</a><a href="#">编辑(E)</a><a href="#">视图(V)</a><a href="#">插入(I)</a><a href="#">属性(A)</a><a href="#">查询(N)</a><a href="#">工具(T)</a><a href="#">实用工具(U)</a><a href="#">应用(P)</a><a href="#">窗口(W)</a><a href="#">帮助(H)</a>
    </nav>
    <p class="ml-8 whitespace-nowrap text-[#444]">中望<span class="text-sm">3D 2022X x64</span></p>
    <p class="ml-8 whitespace-nowrap text-[#444]">零件<span class="text-sm"> - [</span>插头<span class="text-sm">(Amsss).Z3 - [410049002-2015-7-20-_X2_75356C6058F34E0B58F3_X0_B-1_id14]]</span></p>
    <div class="ml-auto flex items-center gap-4">
      <button aria-label="最小化"><svg class="h-4 w-3" viewBox="0 0 12 16"><path d="M1 8h10v4H1z" fill="#fff" stroke="#999" stroke-width="1.500" /></svg></button>
      <button aria-label="还原"><svg class="size-4" viewBox="0 0 16 16"><path d="M5 1h10v10H5zM1 5h9v10H1z" fill="#fff" stroke="#999" stroke-width="1.500" /><path d="M4 9h3v3H4z" fill="none" stroke="#999" /></svg></button>
      <button aria-label="关闭"><svg class="size-4" viewBox="0 0 16 16"><path d="M1 2h4l3 3 3-3h4l-4 6 4 6h-4l-3-3-3 3H1l4-6z" fill="#fff" stroke="#999" stroke-width="1.500" /></svg></button>
    </div>
  </header>

  <!-- ribbon tabs -->
  <div class="flex h-7 shrink-0 items-stretch whitespace-nowrap text-[#333]">
    <button class="mt-px ml-px w-[90px] border border-[#1b4c9c] bg-[#2b62b8] text-white">文件(F)</button>
    <button class="relative z-10 -mb-px ml-1 w-[52px] border border-b-0 border-[#b6bfc9] bg-[#fcfcfc]">造型</button>
    <div class="ml-[14px] flex items-center gap-6">
      <button>曲面</button><button>线框</button><button>直接编辑</button><button>装配</button><button>钣金</button><button class="text-sm">FTI</button><button>焊件</button><button>点云</button><button>数据交换</button><button>修复</button><button class="text-sm">PMI</button><button>工具</button><button>视觉样式</button><button>查询</button><button>电极</button><button class="text-sm">0914</button><button class="text-sm">App</button><button>模具</button><button>仿真</button>
    </div>
    <div class="ml-auto flex items-center pr-1">
      <button aria-label="收起功能区"><svg class="size-3" viewBox="0 0 12 12"><path d="M1 6l5-4 5 4v4L6 6l-5 4z" fill="#fff" stroke="#777" stroke-width="1.200" /></svg></button>
      <label class="relative ml-[14px] flex">
        <input type="text" aria-label="查找命令" placeholder="查找命令" class="h-[25px] w-[180px] border border-[#bcc4cc] bg-white px-[3px] placeholder:text-[#777]" />
        <svg class="absolute top-1 right-1.5 size-4" viewBox="0 0 16 16"><circle cx="7" cy="7" r="5.500" fill="none" stroke="#8795a1" stroke-width="1.500" /><path d="M11 11l4 4" stroke="#8795a1" stroke-width="2" /></svg>
      </label>
      <button aria-label="设置" class="ml-2.5"><svg class="size-5" viewBox="0 0 20 20"><circle cx="10" cy="10" r="8" fill="none" stroke="#a3a3a3" stroke-width="3" stroke-dasharray="4 2.280" /><circle cx="10" cy="10" r="6.500" fill="#eee" stroke="#a3a3a3" /><circle cx="10" cy="10" r="3" fill="#fff" stroke="#a3a3a3" /></svg></button>
      <button aria-label="帮助" class="ml-3.5 flex items-center gap-2"><svg class="size-5" viewBox="0 0 20 20"><circle cx="10" cy="10" r="9" fill="#2256b8" stroke="#aebfd8" stroke-width="2" /><path d="M7 8c0-4 6-4 6-1 0 2-3 2-3 5M10 14v2" fill="none" stroke="#fff" stroke-width="2" /></svg><svg class="h-[5px] w-2"><use href="#caret" /></svg></button>
      <button aria-label="最小化文档" class="ml-2"><svg class="size-3" viewBox="0 0 12 12"><path d="M1 9h9v3H1z" fill="#111" /></svg></button>
      <button aria-label="还原文档" class="ml-2"><svg class="size-3" viewBox="0 0 12 12"><path d="M4 1.500h7v6H9M1 5h7v6H1z" fill="none" stroke="#111" stroke-width="2" /></svg></button>
      <button aria-label="关闭文档" class="ml-2"><svg class="size-3" viewBox="0 0 12 12"><path d="M1 1l10 10M11 1 1 11" stroke="#111" stroke-width="2.500" /></svg></button>
    </div>
  </div>

  <!-- ribbon -->
  <section class="flex h-[118px] shrink-0 border-y border-[#b6bcc9] bg-[#fcfcfc] pl-1 whitespace-nowrap">
    <div class="my-1 flex flex-col justify-between border-r border-[#cfd3d8] px-1">
      <div class="flex">
        <button class="flex min-w-10 flex-col items-center px-[3px]"><svg class="size-10"><use href="#sketch" /></svg><span class="mt-[3px] px-[5px] leading-5">草图</span><svg class="mt-2.5 h-[5px] w-2"><use href="#caret" /></svg></button>
        <button class="flex min-w-10 flex-col items-center px-2"><svg class="size-10"><use href="#cube" /></svg><span class="mt-[3px] leading-5">六面体</span><svg class="mt-2.5 h-[5px] w-2"><use href="#caret" /></svg></button>
        <button class="flex min-w-10 flex-col items-center px-[3px]"><svg class="size-10"><use href="#extrude" /></svg><span class="mt-[3px] px-[5px] leading-5">拉伸</span></button>
        <button class="flex min-w-10 flex-col items-center px-[3px]"><svg class="size-10"><use href="#revolve" /></svg><span class="mt-[3px] px-[5px] leading-5">旋转</span></button>
        <button class="flex min-w-10 flex-col items-center px-[3px]"><svg class="size-10"><use href="#sweep" /></svg><span class="mt-[3px] px-[5px] leading-5">扫掠</span><svg class="mt-2.5 h-[5px] w-2"><use href="#caret" /></svg></button>
        <button class="flex min-w-10 flex-col items-center px-2"><svg class="size-10"><use href="#loft" /></svg><span class="mt-[3px] leading-5">驱动曲线放样</span><svg class="mt-2.5 h-[5px] w-2"><use href="#caret" /></svg></button>
      </div>
      <p class="text-center text-[#5f6779]">基础造型</p>
    </div>
    <div class="my-1 flex flex-col justify-between border-r border-[#cfd3d8] px-1">
      <div class="flex">
        <button class="flex min-w-10 flex-col items-center px-[3px]"><svg class="size-10"><use href="#fillet" /></svg><span class="mt-[3px] px-[5px] leading-5">圆角</span><svg class="mt-2.5 h-[5px] w-2"><use href="#caret" /></svg></button>
        <button class="flex min-w-10 flex-col items-center px-[3px]"><svg class="size-10"><use href="#chamfer" /></svg><span class="mt-[3px] px-[5px] leading-5">倒角</span></button>
        <button class="flex min-w-10 flex-col items-center px-[3px]"><svg class="size-10"><use href="#draft" /></svg><span class="mt-[3px] px-[5px] leading-5">拔模</span><svg class="mt-2.5 h-[5px] w-2"><use href="#caret" /></svg></button>
        <button class="flex min-w-10 flex-col items-center"><svg class="size-10"><use href="#hole" /></svg><span class="mt-[3px] leading-5">孔</span><svg class="mt-2.5 h-[5px] w-2"><use href="#caret" /></svg></button>
        <button class="flex min-w-10 flex-col items-center"><svg class="size-10"><use href="#rib" /></svg><span class="mt-[3px] leading-5">筋</span><svg class="mt-2.5 h-[5px] w-2"><use href="#caret" /></svg></button>
        <button class="flex min-w-10 flex-col items-center px-[3px]"><svg class="size-10"><use href="#thread" /></svg><span class="mt-[3px] px-[5px] leading-5">螺纹</span><svg class="mt-2.5 h-[5px] w-2"><use href="#caret" /></svg></button>
        <button class="flex min-w-10 flex-col items-center px-[3px]"><svg class="size-10"><use href="#lip" /></svg><span class="mt-[3px] px-[5px] leading-5">唇缘</span></button>
        <button class="flex min-w-10 flex-col items-center px-[3px]"><svg class="size-10"><use href="#stock" /></svg><span class="mt-[3px] px-[5px] leading-5">坯料</span></button>
      </div>
      <p class="text-center text-[#5f6779]">工程特征</p>
    </div>
    <div class="my-1 flex flex-col justify-between border-r border-[#cfd3d8] px-1">
      <div class="flex">
        <button class="flex min-w-10 flex-col items-center px-2"><svg class="size-10"><use href="#offset" /></svg><span class="mt-[3px] leading-5">面偏移</span><svg class="mt-2.5 h-[5px] w-2"><use href="#caret" /></svg></button>
        <button class="flex min-w-10 flex-col items-center px-[3px]"><svg class="size-10"><use href="#shell" /></svg><span class="mt-[3px] px-[5px] leading-5">抽壳</span></button>
        <button class="flex min-w-10 flex-col items-center px-[3px]"><svg class="size-10"><use href="#thicken" /></svg><span class="mt-[3px] px-[5px] leading-5">加厚</span></button>
        <button class="flex min-w-10 flex-col items-center px-2"><svg class="size-10"><use href="#union" /></svg><span class="mt-[3px] leading-5">添加实体</span><svg class="mt-2.5 h-[5px] w-2"><use href="#caret" /></svg></button>
        <button class="flex min-w-10 flex-col items-center px-[3px]"><svg class="size-10"><use href="#trim" /></svg><span class="mt-[3px] px-[5px] leading-5">修剪</span><svg class="mt-2.5 h-[5px] w-2"><use href="#caret" /></svg></button>
        <button class="flex min-w-10 flex-col items-center px-[3px]"><svg class="size-10"><use href="#simplify" /></svg><span class="mt-[3px] px-[5px] leading-5">简化</span></button>
        <button class="flex min-w-10 flex-col items-center px-[3px]"><svg class="size-10"><use href="#replace" /></svg><span class="mt-[3px] px-[5px] leading-5">置换</span></button>
        <button class="flex min-w-10 flex-col items-center px-2"><svg class="size-10"><use href="#selfx" /></svg><span class="mt-[3px] leading-5">解析自相交</span></button>
        <button class="flex min-w-10 flex-col items-center px-[3px]"><svg class="size-10"><use href="#emboss" /></svg><span class="mt-[3px] px-[5px] leading-5">镶嵌</span><svg class="mt-2.5 h-[5px] w-2"><use href="#caret" /></svg></button>
      </div>
      <div class="flex items-center text-[#5f6779]"><p class="flex-1 text-center">编辑模型</p><button aria-label="编辑模型设置" class="mr-1"><svg class="size-4" viewBox="0 0 16 16"><path d="M4 12V4h8" fill="none" stroke="#666" stroke-width="1.500" /><path d="M7 7l3 3" stroke="#444" stroke-width="2" /><path d="M13 7v6H7z" fill="#444" /></svg></button></div>
    </div>
    <div class="my-1 flex flex-col justify-between border-r border-[#cfd3d8] px-1">
      <div class="flex">
        <button class="flex min-w-10 flex-col items-center px-2"><svg class="size-10"><use href="#bend" /></svg><span class="mt-[3px] leading-5">圆柱折弯</span><svg class="mt-2.5 h-[5px] w-2"><use href="#caret" /></svg></button>
        <button class="flex min-w-10 flex-col items-center px-2"><svg class="size-10"><use href="#morph" /></svg><span class="mt-[3px] leading-5">由指定点开始变形</span><svg class="mt-2.5 h-[5px] w-2"><use href="#caret" /></svg></button>
        <button class="flex min-w-10 flex-col items-center px-2"><svg class="size-10"><use href="#wrap" /></svg><span class="mt-[3px] leading-5">缠绕到面</span></button>
        <button class="flex min-w-10 flex-col items-center px-2"><svg class="size-10"><use href="#wrap-arr" /></svg><span class="mt-[3px] leading-5">缠绕阵列到面</span></button>
      </div>
      <p class="text-center text-[#5f6779]">变形</p>
    </div>
    <div class="my-1 flex flex-col justify-between border-r border-[#cfd3d8] px-1.5">
      <div class="grid grid-cols-[auto_auto] gap-x-2 gap-y-[9px] pt-1">
        <button class="flex items-center gap-1"><svg class="size-5"><use href="#array" /></svg>阵列几何体<svg class="ml-1 h-[5px] w-2"><use href="#caret" /></svg></button>
        <button class="flex items-center gap-1"><svg class="size-5"><use href="#copy" /></svg>复制</button>
        <button class="col-span-2 flex items-center gap-1"><svg class="size-5"><use href="#mirror" /></svg>镜像几何体</button>
        <button class="col-span-2 flex items-center gap-1"><svg class="size-5"><use href="#move" /></svg>移动<svg class="ml-1 h-[5px] w-2"><use href="#caret" /></svg></button>
      </div>
      <p class="text-center text-[#5f6779]">基础编辑</p>
    </div>
    <div class="my-1 pl-1">
      <button aria-label="基准CSYS" class="flex h-7 w-[46px] items-center border border-[#c9992d] bg-[#ffe07c]"><svg class="h-6 w-7 border-r border-[#c9992d]"><use href="#csys" /></svg><svg class="ml-1 h-[5px] w-2"><use href="#caret" /></svg></button>
    </div>
  </section>

  <!-- selection toolbar -->
  <div class="flex h-[35px] shrink-0 items-center">
    <div class="ml-1 h-5 w-2 border-l-2 border-dotted border-[#8b95a5]"></div>
    <button aria-label="智能拾取" class="grid h-[26px] w-[27px] place-items-center border border-[#c9962b] bg-[#ffe273]"><svg class="size-6"><use href="#pickbulb" /></svg></button>
    <button aria-label="添加" class="grid w-7 place-items-center"><svg class="size-5"><use href="#plus" /></svg></button>
    <button aria-label="移除" class="grid w-7 place-items-center"><svg class="size-5"><use href="#minus" /></svg></button>
    <button aria-label="框选" class="flex w-[43px] items-center gap-1 pl-[3px]"><svg class="size-[22px]"><use href="#pickbox" /></svg><svg class="h-[5px] w-2"><use href="#caret" /></svg></button>
    <button aria-label="多边形" class="grid w-7 place-items-center"><svg class="size-[22px]"><use href="#pickhex" /></svg></button>
    <div class="mx-[3px] h-5 w-px bg-[#bcc2c8]"></div>
    <button aria-label="颜色过滤" class="grid w-7 place-items-center"><svg class="size-[22px]"><use href="#colorfilter" /></svg></button>
    <div class="relative ml-0.5 w-[121px]">
      <select aria-label="过滤器" class="h-[26px] w-full appearance-none border border-[#b9c0c8] bg-white px-1 text-black"><option>全部</option></select>
      <svg class="pointer-events-none absolute top-2.5 right-1.5 h-[5px] w-2"><use href="#caret" /></svg>
    </div>
    <svg class="mx-0.5 size-[25px]"><use href="#compfilter" /></svg>
    <div class="relative w-[166px]">
      <select aria-label="选择范围" class="h-[26px] w-full appearance-none border border-[#b9c0c8] bg-white px-1 text-black"><option>零件和组件</option></select>
      <svg class="pointer-events-none absolute top-2.5 right-1.5 h-[5px] w-2"><use href="#caret" /></svg>
    </div>
    <svg class="mx-1 size-5"><use href="#chain" /></svg>
    <svg class="mx-1 size-5"><use href="#stamp" /></svg>
    <div class="mx-1 h-5 w-px bg-[#bcc2c8]"></div>
    <svg class="mx-1 size-5"><use href="#listg" /></svg>
    <svg class="mx-1 size-5"><use href="#listc" /></svg>
    <svg class="mx-1 size-5"><use href="#listr" /></svg>
    <svg class="mx-1 size-5"><use href="#listr" /></svg>
    <svg class="mx-1 size-5"><use href="#arrowg" /></svg>
    <svg class="mx-1 size-5"><use href="#menured" /></svg>
    <svg class="mx-1 size-5"><use href="#pickall" /></svg>
    <svg class="mx-1 size-5"><use href="#globe" /></svg>
    <svg class="mx-1 size-5"><use href="#gearpick" /></svg>
    <div class="mx-1 h-5 w-px bg-[#bcc2c8]"></div>
    <svg class="mx-1 size-5"><use href="#circpick" /></svg>
    <svg class="mx-1 size-5"><use href="#npick" /></svg>
    <svg class="mx-1 size-5"><use href="#sqpick" /></svg>
    <div class="relative w-[120px]">
      <select disabled aria-label="方向" class="h-[26px] w-full appearance-none border border-[#d5d8db] bg-[#efefef] px-1 text-[#777] opacity-100"><option>法向</option></select>
      <svg class="pointer-events-none absolute top-2.5 right-1.5 h-[5px] w-2"><use href="#caret-off" /></svg>
    </div>
    <svg class="mx-1 size-5"><use href="#arrowtag" /></svg>
    <svg class="mx-1 size-5"><use href="#arrowgear" /></svg>
    <div class="ml-px flex gap-px">
      <button aria-label="捕捉" class="grid h-[26px] w-[27px] place-items-center border border-[#c9962b] bg-[#ffe273]"><svg class="size-[22px]"><use href="#s-play" /></svg></button>
      <button aria-label="点" class="grid h-[26px] w-[27px] place-items-center border border-[#c9962b] bg-[#ffe273]"><svg class="size-[22px]"><use href="#s-pts" /></svg></button>
      <button aria-label="端点" class="grid h-[26px] w-[27px] place-items-center border border-[#c9962b] bg-[#ffe273]"><svg class="size-[22px]"><use href="#s-end" /></svg></button>
      <button aria-label="中点" class="grid h-[26px] w-[27px] place-items-center border border-[#c9962b] bg-[#ffe273]"><svg class="size-[22px]"><use href="#s-mid" /></svg></button>
      <button aria-label="圆心" class="grid h-[26px] w-[27px] place-items-center border border-[#c9962b] bg-[#ffe273]"><svg class="size-[22px]"><use href="#s-cen" /></svg></button>
      <button aria-label="象限点" class="grid h-[26px] w-[27px] place-items-center border border-[#c9962b] bg-[#ffe273]"><svg class="size-[22px]"><use href="#s-quad" /></svg></button>
      <button aria-label="样条点" class="grid h-[26px] w-[27px] place-items-center border border-[#c9962b] bg-[#ffe273]"><svg class="size-[22px]"><use href="#s-spl" /></svg></button>
      <button aria-label="曲线" class="grid h-[26px] w-[27px] place-items-center border border-[#c9962b] bg-[#ffe273]"><svg class="size-[22px]"><use href="#s-crv" /></svg></button>
      <button aria-label="相切" class="grid h-[26px] w-[27px] place-items-center border border-[#c9962b] bg-[#ffe273]"><svg class="size-[22px]"><use href="#s-tan" /></svg></button>
      <button aria-label="线上点" class="grid h-[26px] w-[27px] place-items-center border border-[#c9962b] bg-[#ffe273]"><svg class="size-[22px]"><use href="#s-end" /></svg></button>
      <button aria-label="面上点" class="grid h-[26px] w-[27px] place-items-center border border-[#c9962b] bg-[#ffe273]"><svg class="size-[22px]"><use href="#s-face" /></svg></button>
      <button aria-label="面中心" class="grid h-[26px] w-[27px] place-items-center border border-[#c9962b] bg-[#ffe273]"><svg class="size-[22px]"><use href="#s-facec" /></svg></button>
    </div>
  </div>

  <div class="flex min-h-0 flex-1">
    <!-- command panel -->
    <aside class="flex w-[357px] shrink-0 flex-col border-r-2 border-[#bcc2c8]">
      <div class="flex h-[26px] shrink-0 items-center pr-2 pl-[5px] text-[#444]">
        <h1>基准<span class="text-sm">CSYS</span></h1>
        <button aria-label="浮动" class="ml-auto"><svg class="h-3 w-[14px]" viewBox="0 0 14 12"><path d="M1 2h12v8H1z" fill="#fff" stroke="#999" stroke-width="1.500" /><path d="M4 5h6v3H4z" fill="#bbb" stroke="#999" /></svg></button>
        <button aria-label="关闭面板" class="ml-2.5"><svg class="h-3 w-4" viewBox="0 0 16 12"><path d="M1 1h4l3 2 3-2h4l-4 5 4 5h-4L8 9l-3 2H1l4-5z" fill="#fff" stroke="#999" stroke-width="1.500" /></svg></button>
      </div>
      <div class="flex min-h-0 flex-1">
        <nav class="flex w-10 shrink-0 flex-col items-center border-r border-[#bcc2c8]">
          <a href="#" aria-label="CSYS" class="-mr-px ml-0.5 grid h-[58px] w-[39px] place-items-center self-stretch border border-r-0 border-[#bcc2c8] bg-[#fcfcfc]"><svg class="size-[30px]"><use href="#csys" /></svg></a>
          <a href="#" aria-label="历史" class="mt-4"><svg class="size-[30px]"><use href="#p-tree" /></svg></a>
          <a href="#" aria-label="装配" class="mt-[30px]"><svg class="size-[30px]"><use href="#p-org" /></svg></a>
          <a href="#" aria-label="视图" class="mt-[30px]"><svg class="size-[30px]"><use href="#p-win" /></svg></a>
          <a href="#" aria-label="视觉" class="mt-[30px]"><svg class="size-[30px]"><use href="#p-pic" /></svg></a>
          <a href="#" aria-label="角色" class="mt-[30px]"><svg class="size-[30px]"><use href="#p-user" /></svg></a>
        </nav>
        <form class="relative ml-0.5 flex-1 border-t border-l border-white pr-1">
          <div class="flex gap-0.5 pt-[3px]">
            <button type="button" aria-label="确定" class="grid h-[29px] w-[33px] place-items-center border border-[#c0c5cc] bg-[#fcfcfc]"><svg class="size-[22px]"><use href="#ok" /></svg></button>
            <button type="button" aria-label="取消" class="grid h-[29px] w-[33px] place-items-center border border-[#c0c5cc] bg-[#fcfcfc]"><svg class="size-[22px]"><use href="#no" /></svg></button>
            <button type="button" aria-label="应用" class="grid h-[29px] w-[33px] place-items-center border border-[#c0c5cc] bg-[#fcfcfc]"><svg class="size-[22px]"><use href="#apply" /></svg></button>
            <button type="button" aria-label="信息" class="ml-auto grid h-[29px] w-[33px] place-items-center border border-[#c0c5cc] bg-[#fcfcfc]"><svg class="size-5"><use href="#info" /></svg></button>
            <button type="button" aria-label="展开" class="grid h-[29px] w-[17px] place-items-center border border-[#c0c5cc] bg-[#fcfcfc]"><svg class="h-5 w-2.5"><use href="#pull" /></svg></button>
          </div>

          <section class="ml-0.5">
            <h2 class="mt-1 flex h-[30px] items-center gap-1.5 border border-r-0 border-b-2 border-[#b4bac2] bg-[#fcfcfc] pl-1 font-bold text-[#333]"><svg class="h-2.5 w-[11px]" viewBox="0 0 11 10"><path d="M0 0h11L5.500 10z" fill="#555b63" /></svg>必选</h2>
            <div class="h-[83px] border-b border-l border-white bg-[#dce1ea] pt-1 pr-[3px] pl-2">
              <div class="flex gap-px">
                <button type="button" aria-label="动态" class="grid h-[45px] flex-1 place-items-center border border-[#c9962b] bg-[#ffe07c]"><svg class="size-[39px]"><use href="#m-auto" /></svg></button>
                <button type="button" aria-label="3点" class="grid h-[45px] flex-1 place-items-center border border-[#c0c5cc] bg-[#fcfcfc]"><svg class="size-[39px]"><use href="#m-3pt" /></svg></button>
                <button type="button" aria-label="3平面" class="grid h-[45px] flex-1 place-items-center border border-[#c0c5cc] bg-[#fcfcfc]"><svg class="size-[39px]"><use href="#m-3pl" /></svg></button>
                <button type="button" aria-label="2轴" class="grid h-[45px] flex-1 place-items-center border border-[#c0c5cc] bg-[#fcfcfc]"><svg class="size-[39px]"><use href="#m-ax" /></svg></button>
                <button type="button" aria-label="平面与点" class="grid h-[45px] flex-1 place-items-center border border-[#c0c5cc] bg-[#fcfcfc]"><svg class="size-[39px]"><use href="#m-pl" /></svg></button>
                <button type="button" aria-label="视图平面" class="grid h-[45px] flex-1 place-items-center border border-[#c0c5cc] bg-[#fcfcfc]"><svg class="size-[39px]"><use href="#m-view" /></svg></button>
                <button type="button" aria-label="拖拽" class="grid h-[45px] flex-1 place-items-center border border-[#c0c5cc] bg-[#fcfcfc]"><svg class="size-[39px]"><use href="#m-drag" /></svg></button>
              </div>
              <div class="mt-0.5 flex items-center">
                <label for="entity" class="w-[99px] text-black">实体</label>
                <!-- selected text: the highlight hugs the value -->
                <div class="flex h-[29px] w-[124px] items-center border border-[#12b312] bg-white pl-[3px]">
                  <input id="entity" value="选中1个" class="h-[21px] w-[55px] bg-[#0f78d7] text-white" />
                </div>
                <svg class="ml-2 h-4 w-3" viewBox="0 0 12 16"><path d="M1 1l5 5 5-5M1 9l5 5 5-5" fill="none" stroke="#333" stroke-width="2" /></svg>
                <svg class="ml-3 size-[18px]" viewBox="0 0 18 18"><path d="M6 1h6v7h4l-7 7-7-7h4z" fill="#eaa3a8" stroke="#c4464e" /><path d="M9 3v8M6 9l3 3 3-3" stroke="#c4262b" stroke-width="2" fill="none" /><path d="M1 17h16" stroke="#c4464e" stroke-width="2" /></svg>
                <svg class="ml-2 h-[5px] w-2"><use href="#caret" /></svg>
              </div>
            </div>
          </section>

          <section class="ml-0.5">
            <h2 class="mt-[3px] flex h-[30px] items-center gap-1.5 border border-r-0 border-b-2 border-[#b4bac2] bg-[#fcfcfc] pl-1 font-bold text-[#333]"><svg class="h-2.5 w-[11px]" viewBox="0 0 11 10"><path d="M0 0h11L5.500 10z" fill="#555b63" /></svg>结果</h2>
            <div class="relative h-[122px] border-b border-l border-white bg-[#dce1ea] pt-[3px] pr-1.5 pl-2.5">
              <div class="flex h-9 items-end">
                <label for="axis1" class="w-[101px] self-end pb-[3px] text-black">第一轴</label>
                <div class="relative w-10"><select id="axis1" class="h-[26px] w-full appearance-none border border-[#c0c5cc] bg-white px-[3px] text-sm text-black"><option>Y</option></select><svg class="pointer-events-none absolute top-2.5 right-2 h-[5px] w-2"><use href="#caret" /></svg></div>
                <input aria-label="第一轴对象" disabled value="E191" class="ml-2 h-[26px] w-0 flex-1 border border-[#c9cdd2] bg-[#efefef] px-[3px] text-sm text-[#888]" />
              </div>
              <div class="flex h-9 items-end">
                <label for="axis2" class="w-[101px] pb-[3px] text-black">第二轴</label>
                <div class="relative w-10"><select id="axis2" class="h-[26px] w-full appearance-none border border-[#c0c5cc] bg-white px-[3px] text-sm text-black"><option>Z</option></select><svg class="pointer-events-none absolute top-2.5 right-2 h-[5px] w-2"><use href="#caret" /></svg></div>
                <input aria-label="第二轴方向" disabled value="(-0.629, 0.027, 0.777)" class="ml-2 h-[26px] w-0 flex-1 border border-[#c9cdd2] bg-[#efefef] text-sm text-[#888]" />
              </div>
              <div class="mt-2 flex items-center justify-between">
                <span class="text-black">备选解</span>
                <button type="button" aria-label="备选解" class="grid h-[29px] w-[33px] place-items-center border border-[#c0c5cc] bg-[#fcfcfc]"><svg class="size-6" viewBox="0 0 28 28"><path d="M6 15C4 9 7 6 11 5M17 5c5 1 7 5 6 10M11 22c3 2 4 2 7 0" fill="none" stroke="#2a90b5" stroke-width="3" /><path d="M2 13h8l-5 5zM16 1v8l6-3z" fill="#2a90b5" /><path d="M12 4l2-2v8M4 19c2-3 6 0 3 3l-3 3h5M21 18h4l-2 3c4 0 2 5-2 4" fill="none" stroke="#222" stroke-width="1.500" /></svg></button>
              </div>
              <div class="pointer-events-none absolute top-0 -left-0.5 h-[81px] w-[160px] border-4 border-[#f9ab00]"></div>
            </div>
          </section>

          <section class="ml-0.5">
            <h2 class="mt-[3px] flex h-[30px] items-center gap-1.5 border border-r-0 border-b-2 border-[#b4bac2] bg-[#fcfcfc] pl-1 font-bold text-[#333]"><svg class="h-3 w-[11px]" viewBox="0 0 11 12"><path d="M1 0v12l9-6z" fill="#555b63" /></svg>方向</h2>
          </section>

          <section class="ml-0.5">
            <h2 class="mt-0.5 flex h-[30px] items-center gap-1.5 border border-r-0 border-b-2 border-[#b4bac2] bg-[#fcfcfc] pl-1 font-bold text-[#333]"><svg class="h-2.5 w-[11px]" viewBox="0 0 11 10"><path d="M0 0h11L5.500 10z" fill="#555b63" /></svg>基准面属性</h2>
            <div class="h-[150px] border-b border-l border-white bg-[#dce1ea] pr-[3px] pl-2 text-black">
              <label class="flex h-[31px] items-center gap-1.5"><input type="checkbox" disabled class="size-4 appearance-none border-2 border-[#9aa0a6] bg-[#d3d8e0] outline-1 -outline-offset-4 outline-[#b5bcc8]" />自定义属性</label>
              <div class="flex h-[26px] items-center"><span class="w-[101px]">颜色</span><div class="mr-0.5 h-[22px] flex-1 bg-[#c8c8c8]"></div></div>
              <div class="flex h-[31px] items-center"><span class="w-[99px]">线型</span>
                <button type="button" disabled aria-label="线型" class="flex h-[29px] flex-1 items-center border border-[#cfd3d8] bg-[#efefef]"><span class="ml-[62px] h-[3px] w-[60px] bg-[#666]"></span><svg class="ml-auto h-[5px] w-2"><use href="#caret-off" /></svg></button>
              </div>
              <div class="flex h-[31px] items-center"><span class="w-[99px]">线宽</span>
                <button type="button" disabled aria-label="线宽" class="flex h-[29px] flex-1 items-center border border-[#cfd3d8] bg-[#efefef]"><span class="ml-[62px] h-0.5 w-[60px] bg-[#888]"></span><svg class="ml-auto h-[5px] w-2"><use href="#caret-off" /></svg></button>
              </div>
              <div class="flex h-7 items-center"><label for="fmt" class="w-[99px]">基准格式</label>
                <div class="relative flex-1"><select id="fmt" class="h-[26px] w-full appearance-none border border-[#c0c5cc] bg-white px-[3px]"><option>默认</option></select><svg class="pointer-events-none absolute top-2.5 right-1.5 h-[5px] w-2"><use href="#caret" /></svg></div>
              </div>
            </div>
          </section>
        </form>
      </div>
    </aside>

    <main class="flex min-w-0 flex-1 flex-col">
      <!-- document tabs -->
      <div class="flex h-[26px] shrink-0 border-b border-[#b6bcc9] whitespace-nowrap text-black">
        <button class="flex w-[179px] items-center pl-10">零件<span class="text-sm">001.Z3PRT</span><svg class="ml-2 size-3" viewBox="0 0 12 12"><path d="M1 1l10 10M11 1 1 11" stroke="#9a8560" stroke-width="2.500" /></svg></button>
        <button class="-mb-px flex w-[627px] items-center border border-b-0 border-[#b6bcc9] bg-[#fcfcfc] pl-4"><svg class="mr-2 size-3" viewBox="0 0 12 12"><path d="M6 0v12M0 6h12" stroke="#7b6a45" stroke-width="2.200" /></svg>插头<span class="text-sm">(Amsss).Z3 - [410049002-2015-7-20-_X2_75356C6058F34E0B58F3_X0_B-1_id14]</span><svg class="mr-4 ml-auto size-3" viewBox="0 0 12 12"><path d="M1 1l10 10M11 1 1 11" stroke="#7b6a45" stroke-width="2.500" /></svg></button>
        <button aria-label="新建标签" class="ml-2.5"><svg class="size-3.5" viewBox="0 0 14 14"><path d="M7 0v14M0 7h14" stroke="#aa9f9f" stroke-width="2.500" /></svg></button>
      </div>

      <!-- canvas -->
      <div class="relative min-h-0 flex-1 bg-linear-to-b from-white via-[#d9d9d9] to-[#adadad] text-black">
        <svg class="absolute inset-0 size-full" viewBox="357 239 1563 646" preserveAspectRatio="xMidYMid meet" stroke-linejoin="round">
          <defs>
            <linearGradient id="cyl" gradientUnits="userSpaceOnUse" x1="765" y1="510" x2="812" y2="527"><stop offset="0" stop-color="#b0b0b0" /><stop offset=".25" stop-color="#e4e4e4" /><stop offset=".6" stop-color="#b8b8b8" /><stop offset=".85" stop-color="#5a5a5a" /><stop offset="1" stop-color="#444" /></linearGradient>
            <g id="well"><ellipse rx="15.500" ry="6" fill="#ddd" stroke="#111" /><path d="M-14 0C-12-7 4-6 14 2 2-4-8-3-10 3z" fill="#555" /><path d="M-8-3 6 2l4 3-9 0-9-5z" fill="#c40b0b" stroke="#200" /></g>
          </defs>
          <!-- cavity -->
          <g stroke="#111" fill="#848484">
            <path d="M644 443 657 452 688 369 755 371 867 459 881 473 848 566 599 557z" />
            <path d="M697 454 867 459" />
            <path d="M881 473 915 512 893 575 848 566z" fill="#b9b9b9" />
            <path d="M915 512 931 566 920 596 893 575z" fill="#cacaca" />
            <path d="M881 473 903 491 892 523 870 507z" fill="#cfcfcf" /><path d="M903 491 909 497 898 524H892z" />
            <path d="M789 457 835 459 790 562 785 574C774 575 757 571 751 562z" fill="url(#cyl)" />
            <path d="M688 369 738 357 755 371H712z" fill="#93b0bd" />
            <path d="M688 369H712L682 453 657 452z" />
            <path d="M712 369 729 363 708 422 701 416 672 498 654 484 666 453H682z" fill="#cfcfcf" />
            <path d="M729 363 741 365 718 423H708z" /><path d="M701 416 708 422 679 498H672z" />
          </g>
          <!-- outer faces -->
          <g stroke="#111" fill="#c3c3c3">
            <path d="M738 341 948 348 1128 494 919 487 896 474 757 362z" />
            <path d="M752 349 827 352 873 367 990 463 984 479 896 474 757 362z" fill="#d4d4d4" />
            <path d="M757 362 828 363 862 375 973 465 967 477 896 474z" /><path d="M827 352 828 363M873 367 862 375M990 463 973 465" fill="none" />
            <path d="M919 487 1128 494 1165 537 1183 601 947 588Q937 532 919 487z" fill="#cacaca" />
            <path d="M1165 537 1188 562 1193 602 1183 602z" fill="#cecece" /><path d="M1168 541 1184 601M1172 545 1182 600" fill="none" />
            <path d="M1188 562 1209 599 1215 638 1198 597 1192 605z" fill="#747474" />
            <path d="M947 589 1135 595 1192 600 1192 606 944 597z" fill="#929292" /><path d="M1135 595V604" />
            <path d="M944 597 1192 606 1198 597 1215 638 1206 666 1177 653 1045 649 918 631 932 591z" fill="#888" />
            <path d="M918 631 1045 649 1177 653 1206 667 1208 673 1180 669 1058 667 932 647z" fill="#c1c1c1" />
            <path d="M920 635 1047 652 1178 656 1206 670M932 644 1058 664 1165 667M1045 649 1058 664M1177 653 1186 666" fill="none" />
            <path d="M932 647 1058 667 1180 669 1139 801 1076 799 887 792 930 656z" fill="#909090" />
            <path d="M1180 669 1208 673 1173 793 1139 801z" fill="#505050" />
            <path d="M930 656 1056 674 1113 677 1076 799M930 657 1054 675 1110 678M1161 667 1120 800M1165 667 1125 800M1163 667 1123 800" fill="none" />
          </g>
          <!-- section cut -->
          <path d="M663 368 667 361Q700 347 738 341L752 349 757 362 896 474 908 477 919 487Q937 532 947 588L944 597 932 591 918 631 932 644 930 657 887 792 876 784 914 662 902 652 931 566 912 499 867 459 755 371 738 357 688 369 657 452 644 443 599 557 588 549 644 412 659 422 674 380z" fill="#d0d0d0" stroke="#111" />
          <path d="M644 412 661 415" stroke="#111" />
          <g><use href="#well" transform="translate(961 381) rotate(16)" /><use href="#well" transform="translate(989 402) rotate(16)" /><use href="#well" transform="translate(1024 431) rotate(16)" /><use href="#well" transform="translate(1051 454) rotate(16)" /></g>
          <!-- picked edge and local frame -->
          <path d="M757 361 896 474" stroke="#ffb700" stroke-width="3" />
          <g fill="none" stroke="#a8690f" stroke-width="1.200">
            <path d="M812 382 839 383 859 400 849 432 822 431 801 414z" />
            <path d="M829 416H785M829 416 845 362M829 416 862 443" />
            <path d="M775 414 787 410V418zM848 353 850 367 843 366zM866 448 856 446 860 439z" fill="#c47a0c" />
            <path d="M762 406 774 421M774 406 762 421M848 337H859L848 352H860M867 444 873 451 879 444M873 451V459" stroke-width="2" />
          </g>
          <circle cx="829" cy="416" r="5.500" fill="none" stroke="#111" stroke-width="2" /><path d="M830 390 842 393 831 415 825 418z" fill="#18e4e4" stroke="#0a8f98" /><path d="M826 431 829 424" stroke="#111" />
          <!-- world frame -->
          <g fill="#b49468" fill-opacity=".2" stroke="#a87223" stroke-width="1.200">
            <path d="M986 837 1044 799 1083 830 1025 869z" /><path d="M1006 792 1045 823 1063 876 1023 844z" /><path d="M997 827 1055 788 1073 841 1015 879z" />
          </g>
          <path d="M1034 834 1027 812" stroke="#1414c8" stroke-width="5" /><path d="M1022 802 1032 813 1023 816z" fill="#1414d8" />
          <path d="M1034 834 1011 849" stroke="#e01010" stroke-width="5" /><path d="M1000 857 1008 845 1013 854z" fill="#f22" />
          <path d="M1034 834 1050 846" stroke="#10d010" stroke-width="5" /><path d="M1059 854 1046 851 1054 842z" fill="#0ae00a" />
        </svg>

        <div class="relative flex">
          <p class="w-[446px] pt-[5px] pl-[22px] leading-[21px]">&lt;单击右键&gt;获取选项.<br />点击&lt;CTRL-Del&gt;撤销最后一步的输入点.</p>
          <div class="mt-[3px] flex h-[27px] items-center">
            <svg class="mx-1 size-5"><use href="#exit" /></svg>
            <svg class="mx-1 ml-1.5 size-5"><use href="#v-tree" /></svg><svg class="mr-1.5 ml-0.5 h-[5px] w-2"><use href="#caret" /></svg>
            <svg class="mx-1 size-5"><use href="#eraser" /></svg>
            <svg class="mx-1 size-5"><use href="#v-top" /></svg>
            <svg class="mx-1 size-[22px]"><use href="#v-cube" /></svg><svg class="mr-1.5 ml-px h-[5px] w-2"><use href="#caret" /></svg>
            <svg class="mx-1 size-5"><use href="#v-wire" /></svg><svg class="mr-1.5 ml-0.5 h-[5px] w-2"><use href="#caret" /></svg>
            <svg class="mx-1 size-5"><use href="#v-hex" /></svg><svg class="mr-1.5 ml-0.5 h-[5px] w-2"><use href="#caret" /></svg>
            <svg class="mx-1 size-[22px]"><use href="#v-zoom" /></svg><svg class="mr-1.5 ml-px h-[5px] w-2"><use href="#caret" /></svg>
            <svg class="mx-1 size-5"><use href="#v-fit" /></svg>
            <svg class="mx-1 size-5"><use href="#v-dim" /></svg><svg class="mr-1.5 ml-0.5 h-[5px] w-2"><use href="#caret" /></svg>
            <svg class="mx-1 size-[22px]"><use href="#v-disp" /></svg><svg class="mr-1.5 ml-px h-[5px] w-2"><use href="#caret" /></svg>
            <button aria-label="前景色" class="mx-1 h-3 w-5 border border-[#555] bg-black"></button>
            <button aria-label="背景色" class="mx-1 h-5 w-5 border border-black bg-[#bfe8f7]"></button>
            <svg class="mx-1 size-5"><use href="#v-layer" /></svg><svg class="mr-1.5 ml-0.5 h-[5px] w-2"><use href="#caret" /></svg>
            <div class="relative w-36">
              <select disabled aria-label="图层" class="h-[26px] w-full appearance-none border border-[#d5d8db] bg-[#efefef] pl-[46px] text-sm text-[#777] opacity-100"><option>Layer0000</option></select>
              <svg class="pointer-events-none absolute top-1 left-2 h-[18px] w-9" viewBox="0 0 36 18"><path d="M5 12C2 8 3 2 8 2s6 6 3 10v4H5z" fill="#fff" stroke="#aaa" /><circle cx="26" cy="9" r="6" fill="#d0d0d0" stroke="#999" /></svg>
              <svg class="pointer-events-none absolute top-2 right-1.5 h-[5px] w-2"><use href="#caret-off" /></svg>
            </div>
          </div>
        </div>
        <p class="absolute right-4 bottom-1.5 text-[17px] leading-6 text-[#dcdcdc] [text-shadow:1px_1px_0_#555]">CSDN @山涧果子</p>
      </div>
    </main>
  </div>

  <!-- datum drop-down -->
  <ul class="absolute top-[93px] right-[2px] w-[172px] border border-[#bbb] bg-[linear-gradient(to_right,#fff_51px,#d5d5d5_51px,#d5d5d5_52px,#fcfcfc_52px)] pt-0.5 text-[#444] shadow-[3px_3px_3px_rgba(0,0,0,0.4)]">
    <li><a href="#" class="flex h-[45px] items-center gap-3 pl-[5px]"><svg class="size-10"><use href="#axis" /></svg>基准轴</a></li>
    <li><a href="#" class="flex h-[45px] items-center gap-3 pl-[5px]"><svg class="size-10"><use href="#plane" /></svg>基准面</a></li>
    <li><a href="#" class="flex h-[45px] items-center gap-3 bg-[#fdecb4] pl-[5px] font-medium"><svg class="size-10"><use href="#csys" /></svg><span>基准<b class="text-sm">CSYS</b></span></a></li>
    <li><a href="#" class="flex h-[45px] items-center gap-3 pl-[5px]"><svg class="size-10"><use href="#plane" /></svg>拖拽基准面</a></li>
    <li><a href="#" class="flex h-[46px] items-center gap-3 pl-[5px] text-sm"><svg class="size-10"><use href="#lcs" /></svg>LCS</a></li>
  </ul>
  <div role="tooltip" class="absolute top-[226px] right-[82px] flex h-[71px] w-[159px] flex-col justify-center gap-1.5 border border-[#666] bg-linear-to-b from-white to-[#e4e5f0] pl-[11px] whitespace-nowrap text-black"><p class="text-sm">基准CSYS</p><p>按F1键获取更多信息</p></div>
  <div class="pointer-events-none absolute top-[180px] right-[4px] h-14 w-[173px] border-4 border-[#f9ab00]"></div>
  <div class="absolute top-[177px] right-[220px] grid size-[41px] place-items-center rounded-full bg-[#6c80f7] text-[26px] text-white shadow">1</div>
  <svg class="pointer-events-none absolute top-[211px] right-[67px] h-[18px] w-3" viewBox="0 0 12 18"><path d="M1 1v14l3-3 3 5 2-1-2-5h4z" fill="#fff" stroke="#000" /></svg>
</body>
</html>
